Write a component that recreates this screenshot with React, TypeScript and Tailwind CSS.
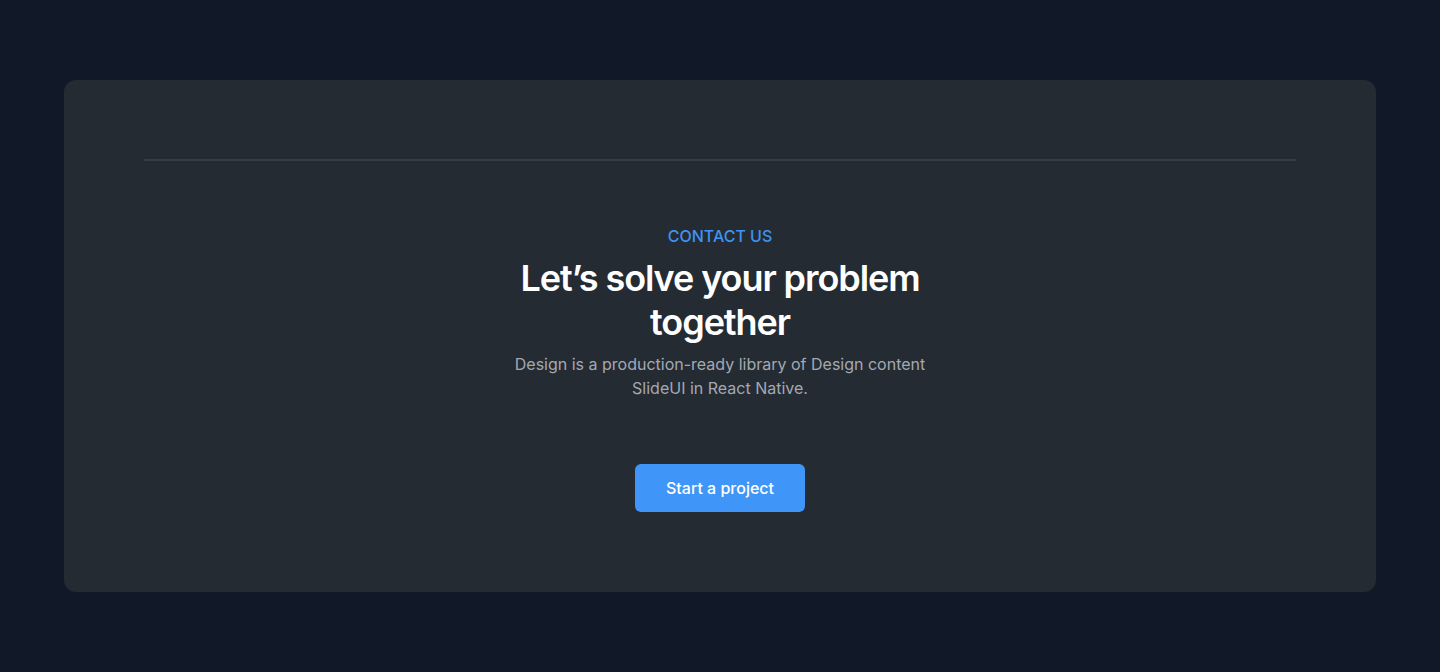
export default function App() {
  return (
    <div className="min-h-screen bg-[#111827] px-16 py-20" style={{ fontFamily: 'Inter, "Noto Sans", sans-serif' }}>
      <section className="rounded-xl bg-[#252b32] px-20 pt-[79px] pb-20">
        <div className="h-[2px] bg-[#363d46]" />
        <div className="mt-[63px] flex flex-col items-center text-center">
          <p className="text-base font-medium leading-6 text-[#3f93f1]">CONTACT US</p>
          <h2 className="mt-2 max-w-md text-4xl font-semibold leading-[44px] tracking-[-0.03em] text-white">
            Let’s solve your problem together
          </h2>
          <p className="mt-2 max-w-[420px] text-base leading-6 text-[#a3a9b2]">
            Design is a production-ready library of Design content SlideUI in React Native.
          </p>
          <button className="mt-16 h-12 w-[170px] rounded-md bg-[#3f96f8] text-base font-medium text-white">
            Start a project
          </button>
        </div>
      </section>
    </div>
  );
}
